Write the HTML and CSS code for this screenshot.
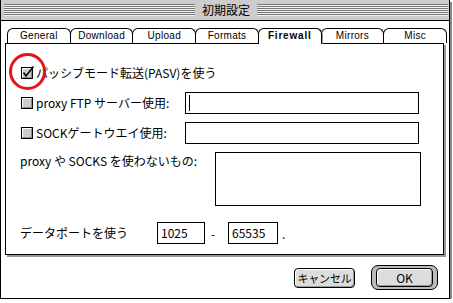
FILE: index.html
```html
<!DOCTYPE html>
<html>
<head>
<meta charset="utf-8">
<title>初期設定</title>
<link rel="stylesheet" href="styles.css">
</head>
<body>
<div class="window">
  <div class="titlebar">
    <div class="stripes"></div>
    <div class="title">初期設定</div>
    <div class="stripes"></div>
  </div>

  <div class="content">
    <div class="tabs">
      <div class="tab">General</div>
      <div class="tab">Download</div>
      <div class="tab">Upload</div>
      <div class="tab">Formats</div>
      <div class="tab active">Firewall</div>
      <div class="tab">Mirrors</div>
      <div class="tab">Misc</div>
    </div>

    <div class="panel">
      <div class="row">
        <span class="checkbox">
          <svg width="12" height="12" viewBox="0 0 12 12">
            <rect x="0.5" y="0.5" width="11" height="11" fill="#ccc" stroke="#000"/>
            <path d="M1.5 10V1.5H10" stroke="#fff" fill="none"/>
            <path d="M10.5 2V10.5H2" stroke="#888" fill="none"/>
            <path d="M2.5 5.5L5 9L12.5 -0.5" stroke="#000" stroke-width="1.6" fill="none"/>
          </svg>
        </span>
        <span class="label">パッシブモード転送(PASV)を使う</span>
      </div>

      <div class="row">
        <span class="checkbox">
          <svg width="12" height="12" viewBox="0 0 12 12">
            <rect x="0.5" y="0.5" width="11" height="11" fill="#ccc" stroke="#000"/>
            <path d="M1.5 10V1.5H10" stroke="#fff" fill="none"/>
            <path d="M10.5 2V10.5H2" stroke="#888" fill="none"/>
          </svg>
        </span>
        <span class="label label-check">proxy FTP サーバー使用:</span>
        <div class="field field-wide"><span class="caret"></span></div>
      </div>

      <div class="row">
        <span class="checkbox">
          <svg width="12" height="12" viewBox="0 0 12 12">
            <rect x="0.5" y="0.5" width="11" height="11" fill="#ccc" stroke="#000"/>
            <path d="M1.5 10V1.5H10" stroke="#fff" fill="none"/>
            <path d="M10.5 2V10.5H2" stroke="#888" fill="none"/>
          </svg>
        </span>
        <span class="label label-check">SOCKゲートウエイ使用:</span>
        <div class="field field-wide"></div>
      </div>

      <div class="row row-area">
        <span class="label label-area">proxy や SOCKS を使わないもの:</span>
        <div class="field field-area"></div>
      </div>

      <div class="row row-port">
        <span class="label label-port">データポートを使う</span>
        <div class="field field-port">1025</div>
        <span class="dash">-</span>
        <div class="field field-port field-port2">65535</div>
        <span class="dot">.</span>
      </div>

      <div class="marker"></div>
    </div>

    <div class="buttons">
      <div class="button button-cancel">キャンセル</div>
      <div class="default-ring"><div class="button button-ok">OK</div></div>
    </div>
  </div>
</div>
</body>
</html>
```

FILE: styles.css
```css
body {
    margin: 0;
    background-color: #fff;
    font-family: "Noto Sans CJK JP", sans-serif;
    font-size: 12px;
    color: #000;
}

.window {
    width: 450px;
    height: 299px;
    box-sizing: border-box;
    border: 1px solid #000;
    border-top: 0;
    background-color: #fff;
    box-shadow: 2px 2px 0 #888;
}

/* title bar */
.titlebar {
    height: 20px;
    border-bottom: 1px solid #000;
    background-color: #ccc;
    display: flex;
    align-items: center;
    gap: 7px;
    padding: 0 1px 0 3px;
}

.stripes {
    flex: 1;
    height: 12px;
    background: repeating-linear-gradient(to bottom, #777 0 1px, #f2f2f2 1px 2px);
}

.title {
    line-height: 20px;
    font-size: 12px;
}

/* tabs */
.content {
    padding: 7px 0 0 4px;
}

.tabs {
    display: flex;
    width: 439px;
    height: 15px;
    margin-left: 2px;
}

.tab {
    flex: 1;
    border: 1px solid #000;
    border-bottom: 0;
    border-radius: 6px 6px 0 0;
    margin-right: -1px;
    background-color: #fff;
    text-align: center;
    font-family: "Liberation Sans", sans-serif;
    font-size: 10px;
    line-height: 14px;
    letter-spacing: 0.3px;
}

.tab.active {
    font-weight: bold;
    letter-spacing: 0.8px;
    align-self: flex-start;
    height: 15px;
    position: relative;
    z-index: 1;
    box-shadow: 1px 0 0 #999;
}

/* panel */
.panel {
    width: 439px;
    height: 212px;
    box-sizing: border-box;
    border: 1px solid #000;
    box-shadow: 2px 2px 0 #999;
    padding: 18px 0 0 14px;
    position: relative;
    display: flex;
    flex-direction: column;
    gap: 8px;
}

.row {
    display: flex;
    align-items: center;
    height: 22px;
}

.checkbox {
    width: 12px;
    height: 12px;
    margin: 0 3px 0 1px;
}

.checkbox svg {
    display: block;
    overflow: visible;
}

.label {
    line-height: 16px;
    white-space: nowrap;
}

.label-check {
    width: 149px;
}

.field {
    box-sizing: border-box;
    height: 22px;
    border: 1px solid #000;
    background-color: #fff;
}

.field-wide {
    width: 234px;
}

.caret {
    display: block;
    width: 1px;
    height: 16px;
    margin: 2px 0 0 3px;
    background-color: #000;
}

.row-area {
    align-items: flex-start;
    height: 54px;
}

.label-area {
    width: 195px;
    padding-top: 1px;
}

.field-area {
    width: 206px;
    height: 54px;
}

.row-port {
    margin-top: 8px;
}

.label-port {
    width: 137px;
}

.field-port {
    width: 48px;
    padding-left: 3px;
    line-height: 20px;
}

.field-port2 {
    width: 50px;
}

.dash {
    width: 23px;
    box-sizing: border-box;
    padding-left: 6px;
}

.dot {
    margin-left: 4px;
}

/* red annotation ring */
.marker {
    position: absolute;
    left: 3px;
    top: 9px;
    width: 37px;
    height: 37px;
    box-sizing: border-box;
    border: 3px solid #e3141b;
    border-radius: 50%;
}

/* buttons */
.buttons {
    display: flex;
    justify-content: flex-end;
    align-items: center;
    gap: 16px;
    height: 25px;
    margin-top: 10px;
    padding-right: 11px;
}

.button {
    box-sizing: border-box;
    border: 1px solid #000;
    border-radius: 4px;
    background-color: #ddd;
    box-shadow: inset 1px 1px 0 #fff, inset -1px -1px 0 #999;
    text-align: center;
    white-space: nowrap;
}

.button-cancel {
    width: 61px;
    height: 20px;
    line-height: 18px;
    font-size: 11px;
    letter-spacing: -0.2px;
}

.default-ring {
    border: 1px solid #000;
    border-radius: 7px;
    padding: 2px 4px;
    background-color: #bbb;
}

.button-ok {
    width: 57px;
    height: 19px;
    line-height: 17px;
}
```
